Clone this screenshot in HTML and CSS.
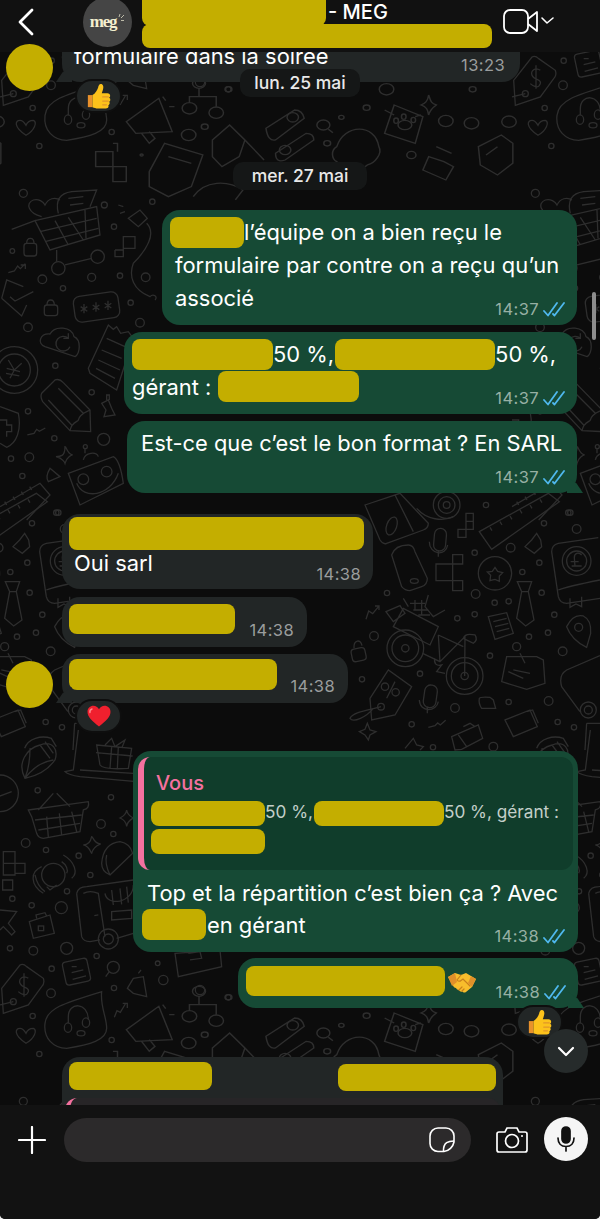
FILE: index.html
```html
<!DOCTYPE html>
<html lang="fr">
<head>
    <meta charset="UTF-8">
    <meta name="viewport" content="width=device-width, initial-scale=1.0">
    <title>Discussion MEG</title>
    <link rel="stylesheet" href="styles.css">
</head>
<body>
    <!-- Shared icons -->
    <svg class="defs" width="0" height="0">
        <symbol id="ticks" viewBox="0 0 22 16">
            <path d="M1 10l4 4.500L14 2M10 13l1.500 1.500L21 2" fill="none" stroke="#4fb8ee" stroke-width="1.800" stroke-linecap="round" stroke-linejoin="round"/>
        </symbol>
        <symbol id="thumb" viewBox="0 0 28 28">
            <path d="M2 13h5v13H2z" fill="#e8912b"/>
            <path d="M7 13c3-2 5-5 6-8 .5-2 1-4 3-4 2.500 0 3 3 2.500 5-.3 2-1 3.500-1.500 5h6c2 0 3 1.200 3 2.700 0 1-.5 1.700-1 2.100.8.500 1.200 1.200 1.200 2.200s-.6 1.800-1.300 2.200c.5.500.8 1.200.6 2-.2 1-.8 1.500-1.500 1.800.3.500.4 1.100.2 1.700-.3 1.100-1.300 1.800-2.700 1.800H13c-2.500 0-4-1-6-1.500z" fill="#fcc21b"/>
            <path d="M18 15h6M18 19.500h6M18 23.500h4" stroke="#e0952a" stroke-width="1.300" stroke-linecap="round" fill="none"/>
        </symbol>
        <symbol id="heart" viewBox="0 0 24 22">
            <path d="M12 21.500C5 16 .5 12 .5 6.800.5 3.200 3.200.8 6.400.8c2.400 0 4.400 1.200 5.600 3.400C13.200 2 15.200.8 17.600.8c3.200 0 5.900 2.400 5.900 6 0 5.200-4.500 9.200-11.500 14.700z" fill="#f0202e"/>
            <path d="M5 4c-1.500.5-2.300 2-2 3.500" stroke="#ff8a8f" stroke-width="1.400" stroke-linecap="round" fill="none"/>
        </symbol>
        <symbol id="shake" viewBox="0 0 30 24">
            <path d="M1 7l7-4 6 2 5-2 10 6-4 8-6 5c-1.500 1-3 .5-3.500-.5-1.500.5-3 0-3.500-1.500-1.500 0-2.500-.8-3-2-1.500 0-2.500-1-3-2.500z" fill="#f8bd2c"/>
            <path d="M14 5l-4 5c1 1.500 3 1.500 4 .5l2-1.500 7 7M12 20l3-3M15 21l2-2" stroke="#c9801c" stroke-width="1.200" fill="none" stroke-linecap="round"/>
            <path d="M1 7l7-4 2 9-5 4zM29 9l-5-3-3 7 4 4z" fill="#e0902a"/>
        </symbol>
    </svg>

    <div class="phone">
        <header class="topbar">
            <svg class="back" width="18" height="28" viewBox="0 0 18 28"><path d="M15 2L3 14l12 12" fill="none" stroke="#fff" stroke-width="2.800" stroke-linecap="round" stroke-linejoin="round"/></svg>
            <div class="logo">
                <span class="logo-text">meg</span>
                <svg class="logo-spark" width="7" height="9" viewBox="0 0 7 9"><path d="M1 4L2 1M3 5l3-3M3 7.500h3" stroke="#bdbba8" stroke-width="1" fill="none"/></svg>
            </div>
            <div class="title">
                <div class="title-line"><span class="redact r-name"></span><span class="title-text">- MEG</span></div>
                <span class="redact r-sub"></span>
            </div>
            <svg class="video" width="52" height="26" viewBox="0 0 52 26">
                <rect x="1" y="2" width="24" height="23" rx="6" fill="none" stroke="#fff" stroke-width="1.800"/>
                <path d="M25 11l9-7v19l-9-7" fill="none" stroke="#fff" stroke-width="1.800" stroke-linejoin="round"/>
                <path d="M39 10l5 5 6-5" fill="none" stroke="#fff" stroke-width="1.600" stroke-linecap="round" stroke-linejoin="round"/>
            </svg>
        </header>

        <main class="chat">
            <!-- Wallpaper doodles, drawn in page pixels; the sheet repeats every 512 x 908 -->
            <svg class="wallpaper" width="600" height="1053" viewBox="0 52 600 1053">
                <defs>
                    <g id="sheet">
                        <!-- top band -->
                        <g transform="scale(.3827 .3333)">
                            <path d="M330 365L415 295l35 100-95 5zM370 400l20 30 15-15-15-20M425 290l8 12M442 320h14"/>
                            <ellipse cx="495" cy="325" rx="19" ry="17"/><ellipse cx="565" cy="338" rx="19" ry="17"/><ellipse cx="520" cy="250" rx="17" ry="15"/>
                            <path d="M495 308v-18h70v30M520 265v25"/>
                            <path d="M695 385l75-55q20 0 25 25l-75 65q-20 5-25-35zM720 460l80-60q20 0 20 20l-75 60q-25 10-25-20z"/>
                            <ellipse cx="765" cy="352" rx="15" ry="14"/><ellipse cx="745" cy="450" rx="15" ry="14"/>
                            <ellipse cx="845" cy="375" rx="17" ry="15"/><path d="M858 388l12 10"/>
                            <path d="M1030 315l75 35-20 80-80-30zM1005 330l25 15M1100 345l-15 5"/>
                            <ellipse cx="1058" cy="375" rx="18" ry="14"/><ellipse cx="1035" cy="362" rx="6" ry="8"/><ellipse cx="1055" cy="350" rx="6" ry="8"/><ellipse cx="1080" cy="360" rx="6" ry="8"/>
                            <path d="M1120 285c-2 20-10 25-20 30 15 5 18 15 20 30 5-20 15-25 20-30-15-5-15-15-20-30z"/>
                            <path d="M1250 440l60-35 30 25v60l-40 35-45-30zM1300 440l-30 25"/>
                            <path d="M880 440c20-70 100-70 110 0 10 20-10 50-30 55-20 20-60 20-80-10-15-10-15-35 0-45z"/>
                            <path d="M555 420l45-45 40 45-15 50-45 30-25-30zM640 420l50 60"/>
                            <path d="M390 515l40-85 100 35-30 95-60 30-50-30zM440 470l60 20"/>
                            <path d="M250 455h45v45h-45zM295 500h35v45h-35zM295 430h12v25"/>
                            <ellipse cx="370" cy="465" rx="4" ry="3"/>
                            <path d="M1120 470l-15 40 60 30 20-40-25-15zM1140 440l40 20"/>
                            <path d="M505 590c30-50 90-50 130-20l-20 30"/>
                            <ellipse cx="493" cy="405" rx="19" ry="17"/><ellipse cx="958" cy="323" rx="9" ry="8"/><ellipse cx="1165" cy="363" rx="19" ry="17"/><ellipse cx="1232" cy="370" rx="19" ry="17"/><ellipse cx="1330" cy="365" rx="19" ry="17"/><ellipse cx="855" cy="430" rx="9" ry="8"/><ellipse cx="1075" cy="465" rx="12" ry="11"/><ellipse cx="535" cy="380" rx="9" ry="8"/><ellipse cx="892" cy="352" rx="7" ry="6"/><ellipse cx="1235" cy="268" rx="9" ry="8"/><ellipse cx="1010" cy="268" rx="19" ry="17"/><ellipse cx="597" cy="268" rx="9" ry="8"/>
                        </g>
                        <!-- left column, upper -->
                        <g transform="translate(0 190) scale(.3333)">
                            <path d="M35 118l70-26 45 88 150-45-10-85-185 42M120 125l170-40M135 155l160-40M165 92l40 73M205 82l45 68M255 60l3 85M170 180v35M195 225l80-20"/>
                            <circle cx="175" cy="235" r="20"/><circle cx="293" cy="200" r="20"/>
                            <path d="M125 80C85 70 75 40 100 30c15-5 30 5 35 15 10-20 30-25 45-15M175 70c-10-40 5-60 40-65l75-5-20 50M205 25l45-5M210 45l40-5"/>
                            <rect x="72" y="160" width="38" height="38" rx="8"/><path d="M80 160c0-20 22-20 22 0"/>
                            <rect x="133" y="345" width="40" height="32" rx="8"/><path d="M141 345c0-20 22-20 22 0"/>
                            <path d="M25 248l18-5 10-15 8 8 15-15M62 225h14v12"/>
                            <path d="M5 325l15-55 50 20M5 325l60 53 15-33M30 320l15 13 55-28"/>
                            <circle cx="127" cy="268" r="13"/><circle cx="189" cy="295" r="8"/><circle cx="37" cy="183" r="7"/><circle cx="275" cy="262" r="12"/><circle cx="360" cy="257" r="8"/><circle cx="342" cy="110" r="8"/><circle cx="313" cy="45" r="9"/><circle cx="457" cy="35" r="8"/><circle cx="70" cy="10" r="12"/><circle cx="392" cy="338" r="8"/><circle cx="420" cy="398" r="13"/><circle cx="84" cy="412" r="13"/><circle cx="166" cy="527" r="8"/><circle cx="275" cy="607" r="8"/><circle cx="84" cy="664" r="8"/><circle cx="163" cy="745" r="8"/><circle cx="311" cy="748" r="18"/><circle cx="88" cy="802" r="13"/><circle cx="33" cy="806" r="8"/><circle cx="67" cy="858" r="8"/><circle cx="175" cy="968" r="8"/><circle cx="437" cy="262" r="13"/>
                            <rect x="222" y="312" width="135" height="78" rx="20" transform="rotate(-8 290 350)"/>
                            <path d="M242 350l20 14M262 350l-20 14M252 342v28M278 345l20 14M298 345l-20 14M288 337v28M314 340l20 14M334 340l-20 14M324 332v28"/>
                            <path d="M135 470c-25-10-15-40 15-38 15-27 65-22 72 8 23 10 18 50 3 60z"/>
                            <path d="M205 445a22 22 0 1 0 5 25M205 430v15h-15"/>
                            <circle cx="43" cy="540" r="70"/><circle cx="43" cy="540" r="48"/>
                            <path d="M25 510l18 30 22-20M43 540l-13 25M20 535l40 10M18 550l40 8"/>
                            <path d="M265 535l60-130 15 13 10-8 12 20 23-5 15 20-50 155-80-50zM320 445l55 25M305 480l60 25M295 510l65 30M288 535l57 30"/>
                            <path d="M125 610l40-40q13-5 25 8l80 82 2 65-62-3-82-87q-8-15-3-25zM145 630l70 75M175 595l75 75M210 722c5-27 25-27 25-32 5-20 27-25 35-30"/>
                            <path d="M305 640l20-10 10 25 10 20-33 5 6-20zM320 630v-15h8v15"/>
                            <path d="M0 650l55 20c10 50-5 90-35 102L0 760M0 690h20v15h15v20H20v15"/>
                            <path d="M195 770c0 30-15 30-27 30 22 5 27 20 27 20 5-20 20-25 23-25-18-5-18-25-23-25z"/>
                            <path d="M150 835l30 25-35 15q-10-15 5-40z"/>
                            <path d="M205 850l135-50q20 10 30 80l-130 65zM230 880c20 50 100 40 125-30M250 810c5-25 40-25 45-10M255 790v-15"/>
                            <circle cx="250" cy="868" r="16"/><circle cx="320" cy="845" r="16"/><circle cx="256" cy="770" r="6"/>
                            <path d="M0 950l120-70 30 35-70 75M20 945l-6-10M45 930l-6-10M70 915l-6-10M95 900l-6-10"/>
                            <path d="M82 735l20-5 8-12 8 6 18-10"/>
                            <path d="M345 180h25v-40h35v35h-35M345 180v20h25v-25"/>
                            <path d="M385 85l35-25 22 25-27 25zM360 70l15-5M355 45l15 5M440 100c30 30 0 80-40 120-15 40 0 80 50 100 10-10 25 0 15 10"/>
                        </g>
                        <!-- right side, middle -->
                        <g transform="translate(350 490) scale(.3333)">
                            <path d="M45 45L150 10l85 90q0 15-15 20l-110 40q-10 5-20-10zM135 15l55 110"/>
                            <ellipse cx="125" cy="108" rx="15" ry="28" transform="rotate(20 125 108)"/>
                            <circle cx="290" cy="45" r="40"/><circle cx="290" cy="45" r="25"/><circle cx="290" cy="45" r="10"/>
                            <path d="M200 55c30 35 80 40 110 25"/>
                            <path d="M348 70h22v48h-22zM348 94h22M324 118h24v24h-24z"/>
                            <rect x="252" y="115" width="36" height="68" rx="18" transform="rotate(5 270 150)"/>
                            <path d="M238 155c0 40 50 45 55 10M265 180v20"/>
                            <path d="M125 195q10-30 50-30 15 0 20 20l37 80q0 20-17 25l-35 12q-15 0-25-12z"/>
                            <ellipse cx="193" cy="273" rx="12" ry="7"/>
                            <path d="M258 222h50v50h-50zM308 194h30v28h-30zM308 272h30v30h-30zM308 222v50"/>
                            <path d="M388 125L595 10l33 25-203 143zM420 112l6 10M450 95l6 10M480 78l6 10M510 60l6 10M540 45l6 10M570 28l6 10"/>
                            <circle cx="408" cy="45" r="8"/><circle cx="482" cy="173" r="13"/><circle cx="374" cy="188" r="8"/><circle cx="582" cy="100" r="8"/><circle cx="655" cy="68" r="8"/><circle cx="680" cy="117" r="13"/><circle cx="568" cy="218" r="8"/><circle cx="517" cy="246" r="8"/><circle cx="377" cy="312" r="13"/><circle cx="434" cy="338" r="8"/><circle cx="476" cy="334" r="8"/><circle cx="575" cy="308" r="8"/><circle cx="322" cy="385" r="8"/><circle cx="374" cy="373" r="8"/><circle cx="613" cy="374" r="8"/><circle cx="594" cy="428" r="8"/><circle cx="537" cy="440" r="8"/><circle cx="420" cy="497" r="8"/><circle cx="638" cy="484" r="13"/><circle cx="72" cy="438" r="13"/><circle cx="111" cy="309" r="8"/><circle cx="210" cy="551" r="8"/><circle cx="36" cy="568" r="8"/><circle cx="315" cy="654" r="13"/><circle cx="476" cy="636" r="8"/><circle cx="596" cy="633" r="13"/><circle cx="623" cy="696" r="8"/><circle cx="672" cy="712" r="8"/><circle cx="185" cy="703" r="8"/><circle cx="249" cy="772" r="8"/><circle cx="430" cy="770" r="13"/>
                            <circle cx="435" cy="250" r="50"/>
                            <path d="M435 232l8 12 15 4-10 10v16l-13-6-15 4 2-16-10-10 15-2z"/>
                            <path d="M525 170l20-20 15-20 12 20 3 20-22 20z"/>
                            <path d="M605 185q0-20 20-25l120-17M605 185l20 135q5 20 25 20l100-15M625 300q25-10 125-30M660 325v27l18-10 17 8v-30"/>
                            <circle cx="680" cy="213" r="43"/><circle cx="680" cy="213" r="30"/>
                            <path d="M695 195c-10-10-22-5-22 8l2 25h-10 30M662 215h24"/>
                            <path d="M502 275h43l-10 30 17 85-25 18-27-23 15-80zM515 305h20"/>
                            <path d="M415 380l55-12 20 62-55 18zM430 395l40-10M435 410l40-10M440 425l38-10"/>
                            <circle cx="166" cy="475" r="55"/><circle cx="166" cy="475" r="40"/><circle cx="166" cy="475" r="11"/>
                            <circle cx="344" cy="558" r="55"/><circle cx="344" cy="558" r="40"/><circle cx="344" cy="558" r="11"/>
                            <path d="M218 490l52 25 75-75-1 118M265 435l75 35M270 515l-5-80M340 445q5-17 35-10 10 15-5 25zM255 505c-5 15 5 25 20 20l-15 20 25 5"/>
                            <path d="M130 410l30-55 105 55-25 55zM108 365l42-18 15 23-35 25zM160 325l15 25M235 315l-10 35 25 30 35-20M180 340h45M190 360h45M205 375h35M195 330v30M215 330v45"/>
                            <rect x="5" y="475" width="42" height="38" rx="10" transform="rotate(-12 26 494)"/><path d="M12 475c-2-25 20-30 24-8"/>
                            <path d="M48 388l8-25 12 8 18-22M75 348h12v12"/>
                            <path d="M455 575l15-75h90l20 10 5 70-55 18zM490 540l50 10M475 545l45 20M510 490l15 30"/>
                            <circle cx="500" cy="470" r="12"/>
                            <path d="M650 410q20-40 50-32 25 12 22 52l-12 42q-45-22-60-62z"/>
                            <circle cx="686" cy="412" r="12"/>
                            <path d="M750 497l-100 43q-25 15-15 50l55 75"/>
                            <circle cx="715" cy="660" r="24"/><circle cx="715" cy="660" r="12"/>
                            <path d="M60 625l55-85 70 50-50 85-70 15zM135 575l-25 50M93 650c-33 10-83 15-93 35 10 15 50-5 70-30"/>
                            <circle cx="105" cy="590" r="11"/><circle cx="137" cy="607" r="11"/><circle cx="93" cy="650" r="10"/>
                            <rect x="222" y="585" width="38" height="68" rx="18" transform="rotate(8 241 619)"/>
                            <path d="M208 630c2 40 52 35 57 5M232 650v20"/>
                            <path d="M388 625q2-5 32-3l10 8 7 25h-42q-10-15-7-30z"/>
                            <path d="M465 690l75-30 22 50-72 30zM530 665l18-5 17 40"/>
                            <path d="M52 700l8 20 18 5-18 10-5 15-10-15-17-10 17-7z"/>
                            <path d="M235 712l20-5 8-8 8 6 16-14"/>
                            <path d="M305 740l80-35 13 40-63 33-20 2zM340 710l20-10 15 10M325 735l25 35"/>
                            <path d="M165 775l25-30 10 20 20 5-10 10M560 775c10-30 50-40 80-30l15 25M710 700h40M705 780l5-80"/>
                        </g>
                        <!-- left column, lower -->
                        <g transform="translate(0 730) scale(.3333)">
                            <path d="M75 145c-25-45 5-90 45-100 40-15 55 15 45 45-25 35-65 50-90 55zM90 55c0 35-5 65-15 90M75 145c25-35 55-50 85-55M120 45l30 40M135 35l25 35"/>
                            <path d="M85 240l180-25q5 20-15 25l-10 65-110 20q-15 0-20-15l-15-50zM105 270l140-15M115 300l125-20M140 260l5 62M178 250l7 65M215 245l15 60M115 240l45-50M210 230l-40-40"/>
                            <path d="M275 320c-5 25-20 25-25 25 20 5 22 23 25 25 5-20 20-25 27-28-22-2-22-22-27-22zM380 240c-2 15-12 20-20 24 10 4 18 10 20 25 2-15 12-20 20-25-8-4-18-10-20-24z"/>
                            <path d="M305 400q5-60 55-65 30 5 38 35l-68 65q-25-10-25-35zM320 375c-5 20 0 40 10 60"/>
                            <circle cx="160" cy="435" r="35"/>
                            <path d="M140 470l10 10 20-15M125 410c-35 15-35 55 5 80M190 375c35 20 45 55 25 70M105 435c5 25 15 40 30 50M185 395c15 10 20 25 15 35"/>
                            <path d="M230 490q5-20 30-20l140-20M230 490l15 130q5 15 25 15l30-5M350 625l50-15M250 490q20-10 45 0l20 130M315 490c5 40 85 30 85-25M335 480l5 45M360 475l5 48M380 470l5 48M335 570v-25l60-5v25zM295 555l-12 2"/>
                            <circle cx="325" cy="627" r="30"/><circle cx="325" cy="627" r="15"/>
                            <path d="M10 365h35v70H10zM45 400h30v30H45zM8 450h30v30H8zM10 400h35"/>
                            <path d="M0 540l50 5-25 35 20 25-10 10-25-25-10 10"/>
                            <path d="M88 575l62-20 13 55-63 15zM110 565l-2-10 27-7 5 10"/>
                            <rect x="115" y="588" width="16" height="14"/>
                            <rect x="192" y="690" width="75" height="70" rx="10" transform="rotate(-12 230 725)"/>
                            <path d="M215 710h15M215 728l35-8M218 748l40-10"/>
                            <circle cx="340" cy="712" r="18"/><path d="M328 725l-11 15"/>
                            <path d="M5 775l55-70q10-5 20 5l50 35q5 15-5 25l-40 55-75 25zM40 815L0 825M85 745c-15-10-30 0-25 15 5 15 30 10 25 25-5 15-20 10-30 0M72 730v70"/>
                            <circle cx="40" cy="815" r="9"/>
                            <path d="M78 940c-38-25-33-45-18-45 10 0 15 10 18 15 4-10 12-15 22-15 12 5 5 30-22 45z"/>
                            <path d="M135 880c5-45 55-60 170-95-5 45 15 75 15 110 0 35-50 50-120 60-40 0-70-30-65-75zM205 880v-20c0-45 60-45 60 10"/>
                            <ellipse cx="204" cy="893" rx="11" ry="14"/><ellipse cx="258" cy="878" rx="11" ry="14"/><ellipse cx="243" cy="910" rx="12" ry="8"/>
                            <path d="M343 862l8-20 10 5 15-25M368 820h14v14"/>
                            <circle cx="113" cy="181" r="8"/><circle cx="77" cy="339" r="13"/><circle cx="138" cy="360" r="8"/><circle cx="303" cy="282" r="13"/><circle cx="340" cy="312" r="8"/><circle cx="236" cy="377" r="8"/><circle cx="333" cy="202" r="8"/><circle cx="271" cy="435" r="8"/><circle cx="201" cy="484" r="8"/><circle cx="37" cy="506" r="8"/><circle cx="95" cy="526" r="8"/><circle cx="184" cy="533" r="18"/><circle cx="30" cy="655" r="8"/><circle cx="100" cy="662" r="13"/><circle cx="200" cy="655" r="18"/><circle cx="290" cy="678" r="8"/><circle cx="155" cy="716" r="8"/><circle cx="342" cy="774" r="8"/><circle cx="153" cy="790" r="13"/><circle cx="98" cy="858" r="8"/><circle cx="335" cy="930" r="8"/><circle cx="118" cy="972" r="8"/>
                            <circle cx="0" cy="190" r="55"/><path d="M-5 200l40-15"/>
                            <path d="M290 45l105 10-10 60q-75 5-85-10zM288 68l110 10M335 50l-5 65M355 50l-3 68M315 45l20-20 10 25 30-20-10 25"/>
                            <path d="M235 0l-15 120-25 5q10 10 45 15l170 15M240 120l160 10"/>
                        </g>
                        <!-- under the last replies -->
                        <g transform="translate(120 740) scale(.3333)">
                            <path d="M165 640l135-10 5 50-130 30zM205 640l35-5 5 20-35 5"/>
                            <circle cx="113" cy="670" r="7"/><circle cx="130" cy="720" r="14"/><circle cx="240" cy="750" r="14"/><circle cx="325" cy="772" r="8"/>
                            <path d="M40 715l30-5 10 60-40-10-18-15zM55 700l8-10"/>
                        </g>
                    </g>
                </defs>
                <g class="doodles">
                    <use href="#sheet"/>
                    <use href="#sheet" x="512"/>
                    <use href="#sheet" x="-512"/>
                    <use href="#sheet" y="908"/>
                    <use href="#sheet" x="512" y="908"/>
                    <use href="#sheet" y="-908"/>
                    <use href="#sheet" x="512" y="-908"/>
                </g>
            </svg>

            <div class="bubble in cut tail">
                <div class="cut-row"><span class="cut-text">formulaire dans la soirée</span><span class="time">13:23</span></div>
            </div>
            <div class="react react-top"><svg class="emoji" width="26" height="26"><use href="#thumb"/></svg></div>

            <div class="date date-second">mer. 27 mai</div>

            <div class="bubble out b-first">
                <p><span class="redact r-a"></span>l’équipe on a bien reçu le<br>formulaire par contre on a reçu qu’un<br>associé</p>
                <div class="meta over"><span class="time">14:37</span><svg class="ticks" width="22" height="16"><use href="#ticks"/></svg></div>
            </div>
            <div class="bubble out b-second">
                <p><span class="redact r-b"></span>50 %,<span class="redact r-c"></span>50 %,<br>gérant :<span class="redact r-d"></span></p>
                <div class="meta over"><span class="time">14:37</span><svg class="ticks" width="22" height="16"><use href="#ticks"/></svg></div>
            </div>
            <div class="bubble out tail b-third">
                <p>Est-ce que c’est le bon format ? En SARL</p>
                <div class="meta below"><span class="time">14:37</span><svg class="ticks" width="22" height="16"><use href="#ticks"/></svg></div>
            </div>

            <div class="bubble in b-oui">
                <span class="redact r-e"></span>
                <p class="oui">Oui sarl</p>
                <div class="meta over"><span class="time">14:38</span></div>
            </div>
            <div class="bubble in short b-in2">
                <span class="redact r-f"></span><span class="time">14:38</span>
            </div>
            <div class="bubble in short tail b-in3">
                <span class="redact r-g"></span><span class="time">14:38</span>
                <span class="redact avatar avatar-low"></span>
            </div>
            <div class="react react-heart"><svg class="emoji" width="24" height="22"><use href="#heart"/></svg></div>

            <div class="bubble out b-reply">
                <div class="quote">
                    <div class="quote-who">Vous</div>
                    <div class="quote-text"><span class="redact q-a"></span>50 %,<span class="redact q-b"></span>50 %, gérant :<br><span class="redact q-a"></span></div>
                </div>
                <p class="reply-text">Top et la répartition c’est bien ça ? Avec<br><span class="redact r-h"></span>en gérant</p>
                <div class="meta over"><span class="time">14:38</span><svg class="ticks" width="22" height="16"><use href="#ticks"/></svg></div>
            </div>
            <div class="bubble out short tail b-shake">
                <span class="redact r-i"></span><svg class="emoji shake" width="30" height="24"><use href="#shake"/></svg>
                <div class="meta"><span class="time">14:38</span><svg class="ticks" width="22" height="16"><use href="#ticks"/></svg></div>
            </div>
            <div class="react react-last"><svg class="emoji" width="26" height="26"><use href="#thumb"/></svg></div>

            <div class="bubble in b-last">
                <div class="last-head"><span class="redact r-j"></span><span class="redact r-k"></span></div>
                <div class="last-quote"></div>
            </div>

            <div class="date date-float">lun. 25 mai</div>
            <div class="scrollbar"></div>
            <button class="down"><svg width="18" height="11" viewBox="0 0 18 11"><path d="M2 2l7 7 7-7" fill="none" stroke="#fff" stroke-width="2.200" stroke-linecap="round" stroke-linejoin="round"/></svg></button>
        </main>

        <span class="redact avatar avatar-top"></span>

        <footer class="composer">
            <svg class="plus" width="28" height="28" viewBox="0 0 28 28"><path d="M14 1v26M1 14h26" stroke="#fff" stroke-width="2.200" stroke-linecap="round"/></svg>
            <div class="field">
                <svg width="26" height="26" viewBox="0 0 26 26" fill="none" stroke="#fff" stroke-width="1.600"><path d="M15 24.500H9a8 8 0 0 1-8-8V9a8 8 0 0 1 8-8h8a8 8 0 0 1 8 8v6c-1 5-5 9-10 9.500z"/><path d="M25 14c-5 0-11 1-10.500 10.500"/></svg>
            </div>
            <svg class="camera" width="32" height="26" viewBox="0 0 32 26" fill="none" stroke="#fff" stroke-width="1.700"><path d="M3 5h6l2-4h10l2 4h6a2 2 0 0 1 2 2v16a2 2 0 0 1-2 2H3a2 2 0 0 1-2-2V7a2 2 0 0 1 2-2z"/><circle cx="16" cy="14" r="6.500"/><circle cx="26" cy="9" r="1" fill="#fff" stroke="none"/></svg>
            <div class="mic">
                <svg width="18" height="26" viewBox="0 0 18 26" fill="none" stroke="#111" stroke-width="1.700"><rect x="5" y="1" width="8" height="16" rx="4" fill="#111"/><path d="M1 12c0 5 3 8.500 8 8.500s8-3.500 8-8.500M9 20.500V25" stroke-linecap="round"/></svg>
            </div>
        </footer>
    </div>
</body>
</html>
```

FILE: styles.css
```css
* {
    box-sizing: border-box;
    margin: 0;
    padding: 0;
}

html, body {
    height: 100%;
    background: #e9e9e9;
}

body {
    font-family: Inter, "Liberation Sans", sans-serif;
    color: #fff;
    overflow: hidden;
}

.defs {
    position: absolute;
}

.phone {
    position: relative;
    width: 600px;
    height: 1219px;
    display: flex;
    flex-direction: column;
    background: #121212;
    border-radius: 0 0 5px 5px;
    overflow: hidden;
}

/* Redaction marks */
.redact {
    display: inline-block;
    background: #c4ae00;
    border-radius: 8px;
    vertical-align: middle;
}

/* Top bar */
.topbar {
    height: 52px;
    flex: none;
    display: flex;
    align-items: flex-start;
    background: #111;
    position: relative;
    z-index: 2;
}

.back {
    margin: 8px 0 0 17px;
}

.logo {
    width: 49px;
    height: 50px;
    margin: -3px 0 0 48px;
    border-radius: 50%;
    background: #454545;
    display: flex;
    align-items: center;
    justify-content: center;
}

.logo-text {
    font-family: "Liberation Serif", serif;
    font-weight: 700;
    font-size: 17px;
    letter-spacing: -1.200px;
    color: #f4efcf;
}

.logo-spark {
    margin: -10px 0 0 2px;
}

.title {
    width: 350px;
    margin-left: 10px;
}

.title-line {
    display: flex;
    height: 24px;
}

.title-text {
    font-size: 20px;
    font-weight: 500;
    margin-left: 2px;
    line-height: 24px;
}

.r-name {
    width: 184px;
    height: 26px;
    border-radius: 0 0 8px 8px;
}

.r-sub {
    display: block;
    width: 350px;
    height: 24px;
}

.video {
    margin: 8px 0 0 11px;
}

/* Chat area */
.chat {
    position: relative;
    flex: 1;
    height: 1053px;
    display: flex;
    flex-direction: column;
    background: #0c0c0c;
    overflow: hidden;
}

.wallpaper {
    position: absolute;
    top: 0;
    left: 0;
}

.doodles {
    fill: none;
    stroke: #2e2e2e;
    stroke-width: 3.900;
}

.bubble {
    position: relative;
    flex: none;
    border-radius: 18px;
    font-size: 21.900px;
    line-height: 33px;
}

.bubble.in {
    background: #222626;
    align-self: flex-start;
    margin-left: 62px;
}

.bubble.out {
    background: #164a35;
    align-self: flex-end;
    margin-right: 23px;
}

.bubble p {
    white-space: nowrap;
}

.bubble.short {
    display: flex;
    align-items: flex-end;
}

.time {
    font-size: 16.500px;
    line-height: 20px;
    letter-spacing: 0.4px;
    color: #9a9d9d;
}

.out .time {
    color: #97b0a4;
}

.meta {
    display: flex;
    align-items: center;
    justify-content: flex-end;
    gap: 4px;
    height: 20px;
    margin-right: -1px;
}

.meta.over {
    margin-top: -16px;
    margin-bottom: -1px;
}

.meta.below {
    margin-top: 7px;
}

.tail::after {
    content: "";
    position: absolute;
    bottom: 0;
    width: 16px;
    height: 16px;
}

.out.tail::after {
    right: -6px;
    background: #164a35;
    clip-path: polygon(0 0, 60% 40%, 100% 100%, 0 100%);
}

.in.tail::after {
    left: -6px;
    background: #222626;
    clip-path: polygon(100% 0, 40% 40%, 0 100%, 100% 100%);
}

/* First, cut off message */
.cut {
    width: 458px;
    height: 30px;
    border-radius: 0 0 18px 18px;
}

.cut-row {
    display: flex;
    justify-content: space-between;
    padding: 0 15px 0 12px;
}

.cut-text {
    margin-top: -12px;
}

.cut .time {
    margin-top: 3px;
}

.date {
    position: relative;
    align-self: center;
    height: 28px;
    width: 134px;
    border-radius: 10px;
    background: #151717;
    font-size: 17.500px;
    font-weight: 500;
    line-height: 28px;
    text-align: center;
    color: #e9e9e9;
}

.date-second {
    margin-top: 49px;
}

.date-float {
    position: absolute;
    top: 17px;
    left: 240px;
    width: 120px;
}

.react {
    position: relative;
    flex: none;
    width: 47px;
    height: 34px;
    border-radius: 17px;
    background: #222626;
    border: 2px solid #0e0e0e;
    display: flex;
    align-items: center;
    justify-content: center;
}

.react-top {
    margin: -3px 0 0 75px;
}

.react-heart {
    margin: -4px 0 0 75px;
}

.react-last {
    margin: -3px 0 0 516px;
}

/* Outgoing messages */
.b-first {
    width: 415px;
    margin-top: 20px;
    padding: 6px 13px 7px;
}

.r-a {
    width: 74px;
    height: 31px;
    margin: -3px 0 0 -5px;
}

.b-second {
    width: 453px;
    margin-top: 7px;
    padding: 6px 13px 7px 8px;
}

.r-b {
    width: 141px;
    height: 31px;
    margin-top: -4px;
}

.r-c {
    width: 160px;
    height: 31px;
    margin: -4px 0 0 1px;
}

.r-d {
    width: 141px;
    height: 31px;
    margin: -6px 0 0 7px;
}

.b-third {
    width: 450px;
    margin-top: 7px;
    padding: 6px 13px 6px 14px;
}

/* Incoming messages */
.b-oui {
    width: 311px;
    margin-top: 21px;
    padding: 3px 13px 5px 7px;
}

.r-e {
    display: block;
    width: 295px;
    height: 33px;
}

.oui {
    margin: -3px 0 0 5px;
}

.b-oui .meta.over {
    margin-top: -16px;
    margin-bottom: 0;
}

.b-in2 {
    width: 245px;
    margin-top: 8px;
    padding: 7px 13px 7px 7px;
    gap: 14px;
}

.r-f {
    width: 167px;
    height: 30px;
    margin-bottom: 6px;
}

.b-in3 {
    width: 286px;
    margin-top: 7px;
    padding: 5px 13px 7px 7px;
    gap: 13px;
}

.r-g {
    width: 209px;
    height: 31px;
    margin-bottom: 6px;
}

.avatar {
    position: absolute;
    width: 47px;
    height: 47px;
    border-radius: 50%;
}

.avatar-top {
    top: 44px;
    left: 6px;
    z-index: 3;
}

.avatar-low {
    left: -56px;
    bottom: -5px;
}

/* Reply */
.bubble.b-reply {
    width: 445px;
    margin-top: 18px;
    margin-right: 22px;
    padding: 6px 5px 7px;
}

.quote {
    height: 113px;
    border-left: 6px solid #f4719f;
    border-radius: 12px;
    background: #103d2b;
    padding: 12px 0 0 7px;
}

.quote-who {
    margin-left: 5px;
    font-size: 20px;
    font-weight: 500;
    line-height: 29px;
    color: #f4719f;
}

.quote-text {
    font-size: 17.200px;
    line-height: 27px;
    color: #c3cfc9;
    white-space: nowrap;
}

.q-a {
    width: 114px;
    height: 25px;
}

.q-b {
    width: 130px;
    height: 25px;
    margin-left: 1px;
}

.reply-text {
    padding-left: 9px;
    margin-top: 7px;
    line-height: 32px;
}

.r-h {
    width: 64px;
    height: 31px;
    margin: -6px 1px 0 -5px;
}

.b-reply .meta.over {
    margin-top: -15px;
    margin-right: 8px;
}

.bubble.b-shake {
    width: 340px;
    margin-top: 6px;
    margin-right: 22px;
    padding: 8px 13px 6px 8px;
}

.r-i {
    width: 199px;
    height: 30px;
    margin-bottom: 6px;
}

.shake {
    margin: 0 auto 8px 2px;
}

/* Clipped last message */
.b-last {
    width: 441px;
    margin-top: 18px;
    height: 100px;
    padding: 5px 7px;
}

.last-head {
    display: flex;
    justify-content: space-between;
    align-items: flex-start;
}

.r-j {
    width: 143px;
    height: 28px;
}

.r-k {
    width: 158px;
    height: 27px;
    margin-top: 2px;
}

.last-quote {
    height: 70px;
    margin: 7px -4px 0;
    border-left: 5px solid #f4719f;
    border-radius: 12px;
    background: #272527;
}

.scrollbar {
    position: absolute;
    top: 240px;
    left: 592px;
    width: 4px;
    height: 48px;
    border-radius: 2px;
    background: #8d8d8d;
}

.down {
    position: absolute;
    top: 977px;
    left: 544px;
    width: 44px;
    height: 44px;
    border: 0;
    border-radius: 50%;
    background: #262b2b;
    display: flex;
    align-items: center;
    justify-content: center;
}

/* Bottom composer */
.composer {
    flex: none;
    height: 114px;
    display: flex;
    align-items: flex-start;
    background: #121212;
    position: relative;
    padding-top: 13px;
}

.plus {
    margin: 8px 0 0 18px;
}

.field {
    width: 407px;
    height: 44px;
    margin-left: 18px;
    border-radius: 22px;
    background: #2c2a2b;
    display: flex;
    align-items: center;
    justify-content: flex-end;
    padding-right: 16px;
}

.camera {
    margin: 9px 0 0 25px;
}

.mic {
    width: 44px;
    height: 44px;
    margin: -1px 0 0 16px;
    border-radius: 50%;
    background: #f5f5f5;
    display: flex;
    align-items: center;
    justify-content: center;
}
```
